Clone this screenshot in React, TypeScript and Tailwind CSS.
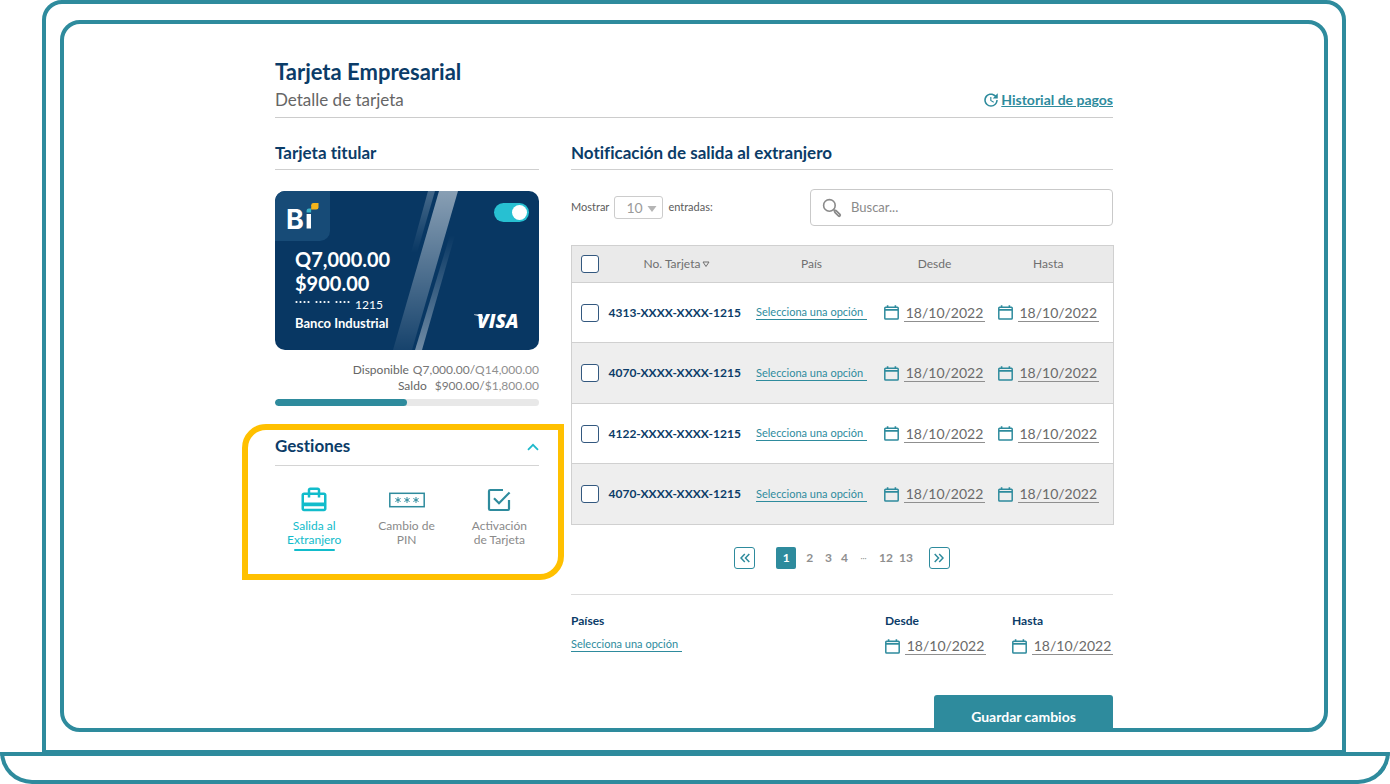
import React, { useState } from 'react';
import { MdUpdate, MdCardTravel } from 'react-icons/md';

const CARDS = [
  '4313-XXXX-XXXX-1215',
  '4070-XXXX-XXXX-1215',
  '4122-XXXX-XXXX-1215',
  '4070-XXXX-XXXX-1215',
];

function CalendarIcon() {
  return (
    <svg viewBox="0 0 15 15" className="h-[15px] w-[15px] shrink-0 text-[#2e8b9d]" fill="none" stroke="currentColor" aria-hidden="true">
      <rect x="0.8" y="2.2" width="13.4" height="11.8" rx="0.8" strokeWidth="1.5" />
      <path d="M1 4.8h13" strokeWidth="1.8" />
      <path d="M3.6 0.3v2.4M11.4 0.3v2.4" strokeWidth="1.6" />
    </svg>
  );
}

function SearchIcon() {
  return (
    <svg viewBox="0 0 20 20" className="h-5 w-5 shrink-0 text-[#8b8b8b]" fill="none" stroke="currentColor" aria-hidden="true">
      <circle cx="7.4" cy="7.4" r="5.8" strokeWidth="1.6" />
      <path d="M11.6 11.6l2 2" strokeWidth="1.6" />
      <path d="M13.6 13.6l3.6 3.6" strokeWidth="3.8" strokeLinecap="round" />
      <path d="M13.9 13.9l3 3" stroke="#cfcfcf" strokeWidth="1" strokeLinecap="round" />
    </svg>
  );
}

function PinIcon() {
  return (
    <svg viewBox="0 0 36 16" className="h-4 w-9 text-[#2e8b9d]" fill="none" stroke="currentColor" aria-hidden="true">
      <rect x="0.8" y="1.3" width="34.4" height="13.4" strokeWidth="1.5" />
      {[9, 18, 27].map((x) => (
        <path key={x} d={`M${x} 5v6M${x - 2.6} 6.5l5.2 3M${x + 2.6} 6.5l-5.2 3`} strokeWidth="1" />
      ))}
    </svg>
  );
}

function ActivateIcon() {
  return (
    <svg viewBox="0 0 24 24" className="h-6 w-6 text-[#2e8b9d]" fill="none" stroke="currentColor" strokeWidth="2.2" aria-hidden="true">
      <path d="M16 2H3.2A1.2 1.2 0 0 0 2 3.2V20.8A1.2 1.2 0 0 0 3.2 22H20.8A1.2 1.2 0 0 0 22 20.8V12" />
      <path d="M7 10.2l5 5L22.6 4.4" />
    </svg>
  );
}

function DoubleChevron({ flip }: { flip?: boolean }) {
  return (
    <svg viewBox="0 0 10 10" className={flip ? 'h-2.5 w-2.5 rotate-180' : 'h-2.5 w-2.5'} fill="none" stroke="currentColor" strokeWidth="1.5" aria-hidden="true">
      <path d="M4.8 1L1 5l3.8 4M9.3 1L5.5 5l3.8 4" />
    </svg>
  );
}

function DateField({ label, id }: { label: string; id?: string }) {
  return (
    <span className="inline-flex items-center gap-[5px]">
      <CalendarIcon />
      <input
        id={id}
        type="text"
        aria-label={label}
        defaultValue="18/10/2022"
        className="h-[18px] w-[81px] border-b border-[#8f8f8f] bg-transparent text-center text-[14px] leading-4 text-[#6a6a6a] outline-none"
      />
    </span>
  );
}

function CountrySelect({ label, id }: { label: string; id?: string }) {
  return (
    <select
      id={id}
      aria-label={label}
      className="h-[15px] w-[111px] appearance-none border-b border-[#2e8b9d] bg-transparent text-[11px] leading-[14px] text-[#2e8b9d] outline-none"
    >
      <option>Selecciona una opción</option>
    </select>
  );
}

function Tick({ label }: { label: string }) {
  return (
    <input
      type="checkbox"
      aria-label={label}
      className="block h-[18px] w-[18px] appearance-none rounded-[3px] border border-[#33587f] bg-white checked:bg-[#2e8b9d]"
    />
  );
}

function BankCard() {
  const [on, setOn] = useState(true);
  return (
    <div className="relative mt-[21px] h-[159px] overflow-hidden rounded-[10px] bg-[#083763] text-white">
      <svg viewBox="0 0 264 159" className="absolute inset-0 h-full w-full" aria-hidden="true">
        <defs>
          <linearGradient id="wide" x1="0" y1="0" x2="0" y2="1">
            <stop offset="0" stopColor="#fff" stopOpacity="0.52" />
            <stop offset="1" stopColor="#fff" stopOpacity="0.06" />
          </linearGradient>
          <linearGradient id="upper" x1="0" y1="0" x2="0" y2="1">
            <stop offset="0" stopColor="#fff" stopOpacity="0.25" />
            <stop offset="1" stopColor="#fff" stopOpacity="0" />
          </linearGradient>
          <linearGradient id="lower" x1="0" y1="0" x2="0" y2="1">
            <stop offset="0" stopColor="#fff" stopOpacity="0" />
            <stop offset="1" stopColor="#fff" stopOpacity="0.42" />
          </linearGradient>
        </defs>
        <path d="M164 0h19L137 159h-19z" fill="url(#wide)" />
        <path d="M153 0h7L142 62h-6z" fill="url(#upper)" />
        <path d="M175 44h5L147 159h-7z" fill="url(#lower)" />
      </svg>
      <div className="relative flex h-full flex-col">
        <div className="flex items-start justify-between">
          <div className="flex h-[50px] w-[55px] items-center rounded-br-[10px] bg-[#174b77] pl-2.5">
            <svg viewBox="0 0 38 40" className="h-10 w-[38px]" role="img" aria-label="Bi">
              <text x="1" y="32.5" fill="#fff" fontFamily="Inter, sans-serif" fontWeight="700" fontSize="27">B</text>
              <rect x="21.6" y="18" width="4.4" height="14.5" fill="#fff" />
              <path d="M21.6 14.8q0-2.3 2.3-2.3h2.2v4h-4.500z" fill="#3bb3c8" />
              <path d="M26.200 9.300q0-2.300 2.300-2.300h5v4.200q0 2.300-2.300 2.300h-5z" fill="#f5b41b" />
            </svg>
          </div>
          <input
            type="checkbox"
            role="switch"
            aria-label="Tarjeta activa"
            checked={on}
            onChange={() => setOn(!on)}
            className="mr-[10px] mt-3 flex h-[19px] w-[35px] appearance-none items-center rounded-full bg-[#8aa0b5] px-0.5 before:h-[15px] before:w-[15px] before:rounded-full before:bg-white checked:justify-end checked:bg-[#27c0d2]"
          />
        </div>
        <div className="flex flex-1 items-end justify-between pb-[19px] pl-5 pr-4">
          <div className="font-bold">
            <p className="text-[20px] leading-6">Q7,000.00</p>
            <p className="text-[20px] leading-6">$900.00</p>
            <p className="flex items-center gap-1 font-normal leading-5">
              <svg viewBox="0 0 56 4" className="mb-1.5 h-1 w-14" fill="#fff" role="img" aria-label="Dígitos ocultos">
                {[1.5, 5.5, 9.5, 13.5, 21.5, 25.5, 29.5, 33.5, 41.5, 45.5, 49.5, 53.5].map((x) => (
                  <circle key={x} cx={x} cy="2" r="1.1" />
                ))}
              </svg>
              <span className="text-[12px] leading-5">1215</span>
            </p>
            <p className="text-[13px] leading-4">Banco Industrial</p>
          </div>
          <svg viewBox="0 0 56 28" className="-mb-1 h-7 w-14" fill="#fff" role="img" aria-label="VISA">
            <text x="10" y="21" fontFamily="Open Sans, sans-serif" fontStyle="italic" fontWeight="800" fontSize="19">VISA</text>
            <path d="M7 7.4h8l1.500 5Q13 8.500 7 7.900z" />
          </svg>
        </div>
      </div>
    </div>
  );
}

function Manage() {
  return (
    <section className="-ml-[33px] -mr-[25px] mt-[18px] h-[156px] rounded-br-[24px] rounded-tl-[24px] border-[6px] border-[#ffc000] pl-[27px] pr-[19px]">
      <div className="flex h-9 items-center justify-between border-b border-[#d4d4d4] pb-1">
        <h2 className="text-[17px] font-bold leading-6 text-[#0b3c68] [font-variant-ligatures:none]">Gestiones</h2>
        <button type="button" aria-label="Contraer gestiones" className="pt-0.5 text-[#1fb9cb]">
          <svg viewBox="0 0 12 8" className="h-2 w-3" fill="none" stroke="currentColor" strokeWidth="1.8" aria-hidden="true">
            <path d="M1 6.8l5-5 5 5" />
          </svg>
        </button>
      </div>
      <div className="flex justify-between px-3 pt-3.5 text-[12px] leading-[14px] text-[#8a8a8a]">
        <button type="button" className="flex flex-col items-center text-[#12bccb]">
          <span className="flex h-[39px] items-center"><MdCardTravel className="h-[30px] w-[30px]" /></span>
          <span>Salida al<br />Extranjero</span>
          <span className="mt-0.5 h-0.5 w-[41px] rounded-full bg-[#12bccb]" />
        </button>
        <button type="button" className="flex flex-col items-center">
          <span className="flex h-[39px] items-center"><PinIcon /></span>
          <span>Cambio de<br />PIN</span>
        </button>
        <button type="button" className="flex flex-col items-center">
          <span className="flex h-[39px] items-center"><ActivateIcon /></span>
          <span>Activación<br />de Tarjeta</span>
        </button>
      </div>
    </section>
  );
}

function Pagination() {
  return (
    <nav aria-label="Paginación" className="mt-[22px] flex items-center justify-center text-[12px] font-bold text-[#8f8f8f]">
      <button type="button" aria-label="Anterior" className="flex h-[22px] w-[21px] items-center justify-center rounded-[3px] border border-[#2e8b9d] text-[#2e8b9d]">
        <DoubleChevron />
      </button>
      <button type="button" aria-current="page" className="ml-[21px] h-[22px] w-5 rounded-[2px] bg-[#2e8b9d] text-white">1</button>
      <div className="flex items-center gap-3 pl-2.5 pr-4">
        <button type="button">2</button>
        <div className="flex gap-[9px]">
          <button type="button">3</button>
          <button type="button">4</button>
        </div>
        <span className="w-[7px] text-center text-[8px] font-normal">···</span>
        <div className="flex gap-1.5">
          <button type="button">12</button>
          <button type="button">13</button>
        </div>
      </div>
      <button type="button" aria-label="Siguiente" className="flex h-[22px] w-[21px] items-center justify-center rounded-[3px] border border-[#2e8b9d] text-[#2e8b9d]">
        <DoubleChevron flip />
      </button>
    </nav>
  );
}

function Notifications() {
  return (
    <section className="min-w-0 flex-1">
      <h2 className="flex h-8 items-center border-b border-[#cfcfcf] pb-0.5 text-[17px] font-bold text-[#0b3c68] [font-variant-ligatures:none]">
        Notificación de salida al extranjero
      </h2>

      <div className="mt-[19px] flex items-center justify-between">
        <label className="flex items-center gap-[5px] text-[11px] text-[#5c5c5c]">
          Mostrar
          <span className="relative flex">
            <select className="h-[23px] w-[49px] appearance-none rounded-[3px] border border-[#cccccc] bg-white pl-[11px] text-[14px] text-[#9b9b9b] outline-none">
              <option>10</option>
            </select>
            <svg viewBox="0 0 10 6" className="pointer-events-none absolute right-1.5 top-[10px] h-1.5 w-2.5" fill="#b5b5b5" aria-hidden="true">
              <path d="M0.5 0h9L5 6z" />
            </svg>
          </span>
          entradas:
        </label>
        <label className="flex h-[37px] w-[303px] items-center gap-[9px] rounded-[4px] border border-[#c9c9c9] pl-[11px]">
          <SearchIcon />
          <input
            type="search"
            aria-label="Buscar"
            placeholder="Buscar..."
            className="w-full bg-transparent text-[13px] text-[#777777] outline-none placeholder:text-[#8a8a8a]"
          />
        </label>
      </div>

      <table className="mt-[19px] w-full table-fixed border-collapse border border-[#d0d0d0] text-center">
        <colgroup>
          <col className="w-[37px]" />
          <col className="w-[137px]" />
          <col className="w-[132px]" />
          <col className="w-[114px]" />
          <col className="w-[122px]" />
        </colgroup>
        <thead>
          <tr className="h-[37px] border-b border-[#d0d0d0] bg-[#eaeaea] text-[12px] text-[#6f6f6f]">
            <th className="pl-[9px]"><Tick label="Seleccionar todas" /></th>
            <th className="font-normal">
              <span className="inline-flex items-center gap-0.5">
                No. Tarjeta
                <svg viewBox="0 0 8 7" className="h-[7px] w-2" fill="none" stroke="currentColor" aria-hidden="true">
                  <path d="M1 1h6L4 5.5z" />
                </svg>
              </span>
            </th>
            <th className="font-normal">País</th>
            <th className="font-normal">Desde</th>
            <th className="pr-2 font-normal">Hasta</th>
          </tr>
        </thead>
        <tbody>
          {CARDS.map((card, i) => (
            <tr key={i} className="h-[60px] border-b border-[#d0d0d0] even:h-[61px] even:bg-[#eeeeee]">
              <td className="pl-[9px]"><Tick label={`Seleccionar ${card}`} /></td>
              <td className="whitespace-nowrap text-left text-[12px] font-bold text-[#0b3c68]">{card}</td>
              <td><div className="flex justify-center"><CountrySelect label={`País para ${card}`} /></div></td>
              <td><div className="flex justify-center"><DateField label="Desde" /></div></td>
              <td className="pr-2"><div className="flex justify-center"><DateField label="Hasta" /></div></td>
            </tr>
          ))}
        </tbody>
      </table>

      <Pagination />

      <div className="mt-[25px] flex justify-between border-t border-[#dcdcdc] pt-[18px]">
        <div className="flex flex-col items-start gap-2">
          <label htmlFor="paises" className="text-[12px] font-bold leading-4 text-[#0b3c68]">Países</label>
          <CountrySelect id="paises" label="Países" />
        </div>
        <div className="flex gap-[26px]">
          <div className="flex flex-col items-start gap-2">
            <label htmlFor="desde" className="text-[12px] font-bold leading-4 text-[#0b3c68]">Desde</label>
            <DateField id="desde" label="Desde" />
          </div>
          <div className="flex flex-col items-start gap-2">
            <label htmlFor="hasta" className="text-[12px] font-bold leading-4 text-[#0b3c68]">Hasta</label>
            <DateField id="hasta" label="Hasta" />
          </div>
        </div>
      </div>

      <div className="mt-10 flex justify-end">
        <button type="button" className="h-[43px] w-[179px] rounded-[3px] bg-[#2e8b9d] text-[14px] font-bold text-white">
          Guardar cambios
        </button>
      </div>
    </section>
  );
}

export default function App() {
  return (
    <div className="flex h-screen flex-col overflow-hidden bg-white font-['Lato',sans-serif]">
      <div className="ml-[42px] mr-[44px] flex min-h-0 flex-1 flex-col rounded-t-[20px] border-4 border-[#2e8b9d] px-3.5 pb-[18px] pt-4">
        <div className="min-h-0 flex-1 overflow-hidden rounded-[20px] border-4 border-[#2e8b9d]">
          <main className="mx-auto max-w-[838px] pt-[34px]">
            <header className="flex items-end justify-between border-b border-[#cccccc] pb-1">
              <div>
                <h1 className="text-[22px] font-bold leading-7 text-[#0b3c68]">Tarjeta Empresarial</h1>
                <p className="text-[17px] leading-[27px] text-[#666666]">Detalle de tarjeta</p>
              </div>
              <a href="#historial" className="mb-1 flex items-center gap-px text-[14px] font-bold leading-[18px] text-[#2e8b9d]">
                <MdUpdate className="h-[18px] w-[18px]" />
                <span className="underline">Historial de pagos</span>
              </a>
            </header>

            <div className="mt-5 flex gap-8">
              <div className="w-[264px] shrink-0">
                <h2 className="flex h-8 items-center border-b border-[#cfcfcf] pb-0.5 text-[17px] font-bold text-[#0b3c68] [font-variant-ligatures:none]">
                  Tarjeta titular
                </h2>
                <BankCard />
                <dl className="mt-3 text-right text-[12px] leading-4 text-[#8f8f8f]">
                  <div className="flex justify-end gap-1">
                    <dt className="text-[#666666]">Disponible</dt>
                    <dd><span className="text-[#777777]">Q7,000.00/</span>Q14,000.00</dd>
                  </div>
                  <div className="flex justify-end gap-2">
                    <dt className="text-[#666666]">Saldo</dt>
                    <dd><span className="text-[#777777]">$900.00/</span>$1,800.00</dd>
                  </div>
                </dl>
                <div className="mt-[5px] h-[7px] overflow-hidden rounded-full bg-[#e8e8e8]">
                  <div className="h-full w-1/2 rounded-full bg-[#2e8b9d]" />
                </div>
                <Manage />
              </div>
              <Notifications />
            </div>
          </main>
        </div>
      </div>
      <div className="-mt-0.5 h-8 shrink-0 rounded-b-[32px] border-4 border-[#2e8b9d]" />
    </div>
  );
}
